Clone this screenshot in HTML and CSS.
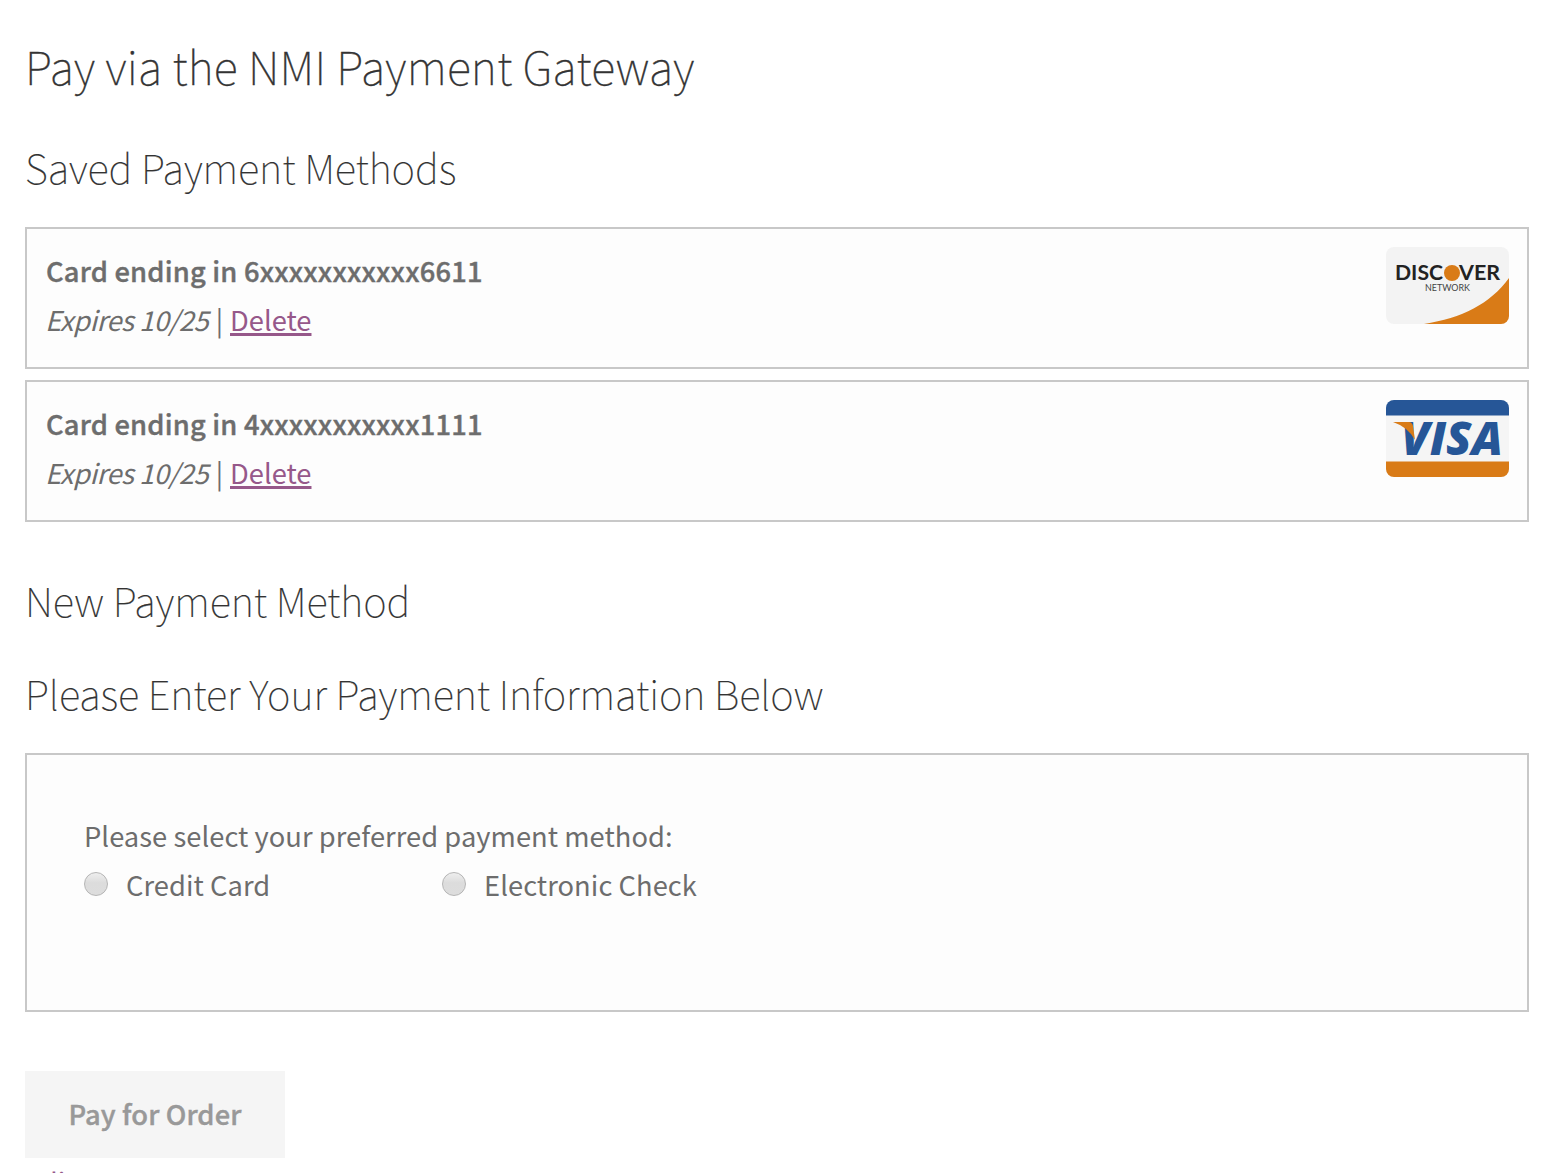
FILE: index.html
```html
<!DOCTYPE html>
<html lang="en">
<head>
<meta charset="utf-8">
<title>Pay via the NMI Payment Gateway</title>
<link rel="stylesheet" href="styles.css">
</head>
<body>
<main class="page">
  <h1 class="title">Pay via the NMI Payment Gateway</h1>
  <h2 class="heading saved-heading">Saved Payment Methods</h2>
  <section class="cards">
    <article class="card">
      <div class="details">
        <strong class="number">Card ending in 6xxxxxxxxxxx6611</strong>
        <p class="meta"><em class="expiry">Expires 10/25</em><span class="bar">|</span><a class="link" href="#">Delete</a></p>
      </div>
      <svg class="logo" viewBox="0 0 123 77" role="img" aria-label="Discover Network">
        <defs><clipPath id="discover"><rect width="123" height="77" rx="8"/></clipPath></defs>
        <g clip-path="url(#discover)">
          <rect width="123" height="77" fill="#f3f3f3"/>
          <path d="M38 77C76 71 104 57 123 31V77Z" fill="#d97b17"/>
        </g>
        <text class="discover" x="9" y="33" textLength="48" lengthAdjust="spacingAndGlyphs">DISC</text>
        <circle cx="66" cy="26" r="8" fill="#d97b17"/>
        <text class="discover" x="73" y="33" textLength="41" lengthAdjust="spacingAndGlyphs">VER</text>
        <text class="network" x="39" y="44" textLength="45" lengthAdjust="spacingAndGlyphs">NETWORK</text>
      </svg>
    </article>
    <article class="card">
      <div class="details">
        <strong class="number">Card ending in 4xxxxxxxxxxx1111</strong>
        <p class="meta"><em class="expiry">Expires 10/25</em><span class="bar">|</span><a class="link" href="#">Delete</a></p>
      </div>
      <svg class="logo" viewBox="0 0 123 77" role="img" aria-label="Visa">
        <defs><clipPath id="visa"><rect width="123" height="77" rx="8"/></clipPath></defs>
        <g clip-path="url(#visa)">
          <rect width="123" height="77" fill="#f5f5f5"/>
          <rect width="123" height="15.500" fill="#265697"/>
          <rect y="61.500" width="123" height="16" fill="#d97b17"/>
        </g>
        <text class="visa" x="15" y="55" textLength="102" lengthAdjust="spacingAndGlyphs">VISA</text>
        <path d="M7 22H23Q26 22 27 26L29 40Q22 27 7 22Z" fill="#d97b17"/>
      </svg>
    </article>
  </section>
  <h2 class="heading new-heading">New Payment Method</h2>
  <h2 class="heading info-heading">Please Enter Your Payment Information Below</h2>
  <form class="method">
    <p class="prompt">Please select your preferred payment method:</p>
    <div class="options">
      <label class="option"><input class="radio" type="radio" name="method"><span>Credit Card</span></label>
      <label class="option"><input class="radio" type="radio" name="method"><span>Electronic Check</span></label>
    </div>
  </form>
  <button class="pay" type="button" disabled>Pay for Order</button>
  <a class="edit" href="#">Edit</a>
</main>
</body>
</html>
```

FILE: styles.css
```css
* { box-sizing: border-box; margin: 0; padding: 0; }
body {
  background: #fff;
  color: #6d6d6d;
  font: 400 27.300px/49px "Source Sans Pro", "Noto Sans CJK SC", sans-serif;
  height: 1173px;
  overflow: hidden;
}
.page { display: flex; flex-direction: column; padding: 36px 31px 0 25px; }
.title, .heading { color: #333; font-weight: 100; white-space: nowrap; }
.title { font-size: 45px; line-height: 60px; letter-spacing: 0.240px; -webkit-text-stroke: 0.350px #333; }
.heading { font-size: 40px; line-height: 54px; letter-spacing: -0.090px; -webkit-text-stroke: 0.150px #333; }
.saved-heading { margin-top: 44px; }
.cards { display: flex; flex-direction: column; gap: 11px; margin-top: 33px; }
.card {
  display: flex;
  justify-content: space-between;
  align-items: flex-start;
  height: 142px;
  padding: 18px 18px 0 19px;
  border: 2px solid #c8c8c8;
  background: #fdfdfd;
}
.details { display: flex; flex-direction: column; margin-top: -1px; white-space: nowrap; }
.number { font-weight: 500; height: 49px; letter-spacing: 0.190px; -webkit-text-stroke: 0.400px #6d6d6d; }
.meta { display: flex; }
.expiry { width: 164px; margin-left: -1px; letter-spacing: -0.420px; }
.bar { width: 21px; text-align: center; }
.link, .edit { color: #96588a; text-decoration: underline; text-decoration-thickness: 3px; text-underline-offset: 2px; }
.logo { width: 123px; height: 77px; flex: none; }
.discover { font: 700 20px Lato, sans-serif; fill: #222; }
.network { font: 400 9px Lato, sans-serif; fill: #444; }
.visa { font: italic 800 46px "Open Sans", sans-serif; fill: #265697; }
.new-heading { margin-top: 51px; }
.info-heading { margin-top: 39px; }
.method {
  height: 259px;
  margin-top: 33px;
  padding: 56px 57px;
  border: 2px solid #c8c8c8;
  background: #fdfdfd;
}
.prompt { letter-spacing: 0.050px; }
.options { display: flex; }
.option { display: flex; width: 358px; white-space: nowrap; letter-spacing: 0.060px; }
.radio {
  appearance: none;
  flex: none;
  width: 24px;
  height: 24px;
  margin: 12px 18px 0 0;
  border: 1px solid #b5b5b5;
  border-radius: 50%;
  background: linear-gradient(#eee, #dcdcdc 45%, #ddd);
}
.pay {
  width: 260px;
  height: 87px;
  margin-top: 59px;
  padding-bottom: 2px;
  border: 0;
  background: #f5f5f5;
  color: #999;
  font: inherit;
  font-weight: 500;
  letter-spacing: 0.100px;
  -webkit-text-stroke: 0.400px #999;
}
.edit { margin-top: -1px; align-self: flex-start; }
```
